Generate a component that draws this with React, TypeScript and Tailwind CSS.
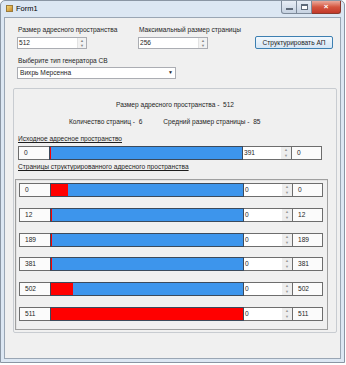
import React from "react";

type Page = { start: number; red: number };

const pages: Page[] = [
  { start: 0, red: 17 },
  { start: 12, red: 1 },
  { start: 189, red: 1 },
  { start: 381, red: 1 },
  { start: 502, red: 22 },
  { start: 511, red: 194 },
];

function Spin({ value, w }: { value: string; w: string }) {
  return (
    <div className={`flex h-[12px] ${w} border border-[#abadb3] bg-white`}>
      <span className="flex-1 pl-[1px] leading-[10px]">{value}</span>
      <div className="flex w-[9px] flex-col border-l border-[#e3e3e3] bg-[#f2f2f2]">
        <span className="flex h-1/2 items-center justify-center text-[4px] leading-none text-[#888]">▲</span>
        <span className="flex h-1/2 items-center justify-center text-[4px] leading-none text-[#888]">▼</span>
      </div>
    </div>
  );
}

function Row({ left, red, spin, right }: { left: string; red: number; spin: string; right: string }) {
  return (
    <div className="flex h-[14px] w-[304px]">
      <div className="w-[31px] border border-[#6d6d6d] border-r-0 bg-[#fbfbfb] pl-[5px] leading-[12px]">{left}</div>
      <div className="flex w-[194px] border border-[#3b4a5c] bg-[#3d95ec]">
        <div className="h-full bg-[#ff0000]" style={{ width: red }} />
      </div>
      <div className="flex w-[48px] border-y border-[#6d6d6d] bg-white">
        <span className="flex-1 pl-[1px] leading-[12px]">{spin}</span>
        <div className="flex w-[10px] flex-col bg-[#eeeeee]">
          <span className="flex h-1/2 items-center justify-center text-[4px] leading-none text-[#999]">▲</span>
          <span className="flex h-1/2 items-center justify-center text-[4px] leading-none text-[#999]">▼</span>
        </div>
      </div>
      <div className="w-[31px] border border-[#6d6d6d] bg-[#fbfbfb] pl-[5px] leading-[12px]">{right}</div>
    </div>
  );
}

export default function App() {
  return (
    <div className="h-[365px] w-[346px] overflow-hidden bg-white font-['Liberation_Sans',Arial,sans-serif] text-[6.6px] text-[#1e1e1e]">
      <div className="flex h-[363px] w-[345px] flex-col rounded-t-[5px] border border-[#8a96a4] bg-[#dce7f3]">
        {/* title bar */}
        <div className="flex h-[16px] items-start">
          <div className="mt-[4px] ml-[5px] h-[7px] w-[7px] bg-gradient-to-br from-[#f5d76e] to-[#c98a2a] border border-[#9a7b3c]" />
          <span className="mt-[3px] ml-[3px] text-[7.5px] leading-[9px] text-black">Form1</span>
          <div className="ml-auto mr-[3px] flex h-[13px]">
            <div className="flex w-[16px] items-end justify-center rounded-bl-[3px] border border-t-0 border-[#7d8a9a] bg-gradient-to-b from-[#e8eef6] to-[#c6d2e1] pb-[3px]">
              <div className="h-[2px] w-[7px] border border-[#5f6b7a] bg-white" />
            </div>
            <div className="flex w-[15px] items-center justify-center border-b border-r border-[#7d8a9a] bg-gradient-to-b from-[#e8eef6] to-[#c6d2e1]">
              <div className="h-[6px] w-[7px] border border-[#5f6b7a] border-t-2 bg-white" />
            </div>
            <div className="flex w-[29px] items-center justify-center rounded-br-[3px] border-b border-r border-[#8a3a2e] bg-gradient-to-b from-[#e9a99c] via-[#d4553f] to-[#c2382a] text-[8px] font-bold leading-none text-white">
              ×
            </div>
          </div>
        </div>

        {/* client area */}
        <div className="mx-[3px] mb-[3px] flex-1 border border-[#9aa6b4] bg-[#f0f0f0]">
          <div className="flex pt-[7px]">
            <div className="ml-[12px] flex w-[110px] flex-col">
              <span className="ml-[1px] h-[12px] leading-[9px]">Размер адресного пространства</span>
              <Spin value="512" w="w-[70px]" />
            </div>
            <div className="ml-[11px] flex w-[110px] flex-col">
              <span className="ml-[1px] h-[12px] leading-[9px]">Максимальный размер страницы</span>
              <Spin value="256" w="w-[70px]" />
            </div>
            <div className="ml-[7px] mt-[11px] flex h-[13px] w-[78px] items-center justify-center rounded-[2px] border border-[#3c7fb1] bg-gradient-to-b from-[#f2f8fd] to-[#d6e6f5]">
              Структурировать АП
            </div>
          </div>

          <div className="ml-[12px] mt-[7px] flex flex-col">
            <span className="ml-[1px] h-[11px] leading-[9px]">Выберите тип генератора СВ</span>
            <div className="flex h-[12px] w-[159px] items-center border border-[#abadb3] bg-white pl-[2px]">
              <span className="flex-1">Вихрь Мерсенна</span>
              <span className="mr-[2px] text-[5px]">▼</span>
            </div>
          </div>

          {/* main group box */}
          <div className="ml-[8px] mt-[9px] h-[245px] w-[324px] rounded-[2px] border border-[#c8ccd1]">
            <div className="mt-[11px] text-center leading-[9px]">Размер адресного пространства -&nbsp;&nbsp;512</div>
            <div className="mt-[8px] flex leading-[9px]">
              <span className="ml-[55px]">Количество страниц -&nbsp;&nbsp;6</span>
              <span className="ml-[21px]">Средний размер страницы -&nbsp;&nbsp;85</span>
            </div>
            <div className="ml-[4px] mt-[8px] leading-[9px] underline">Исходное адресное пространство</div>
            <div className="ml-[4px] mt-[3px]">
              <Row left="0" red={1} spin="391" right="0" />
            </div>
            <div className="ml-[4px] mt-[2px] leading-[9px] underline">Страницы структурированного адресного пространства</div>
            <div className="ml-[1px] mt-[8px] flex h-[151px] w-[313px] flex-col gap-[10.8px] border border-[#a0a0a0] pt-[3px] pl-[3px] shadow-[inset_1px_1px_0_#e3e3e3]">
              {pages.map((p, i) => (
                <Row key={i} left={String(p.start)} red={p.red} spin="0" right={String(p.start)} />
              ))}
            </div>
          </div>
        </div>
      </div>
    </div>
  );
}
